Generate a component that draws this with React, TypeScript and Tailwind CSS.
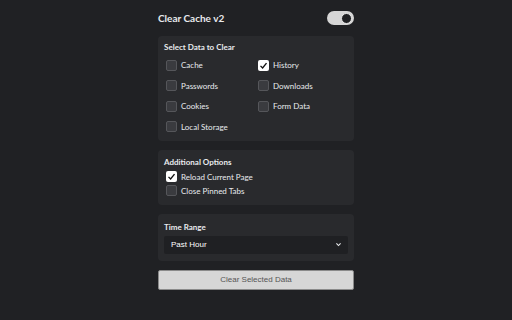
import { useState } from "react";

type Option = { id: string; label: string };

const dataOptions: Option[] = [
  { id: "cache", label: "Cache" },
  { id: "history", label: "History" },
  { id: "passwords", label: "Passwords" },
  { id: "downloads", label: "Downloads" },
  { id: "cookies", label: "Cookies" },
  { id: "formData", label: "Form Data" },
  { id: "localStorage", label: "Local Storage" },
];

function Check({ checked }: { checked: boolean }) {
  return checked ? (
    <span className="flex h-[11px] w-[11px] items-center justify-center rounded-[2px] bg-white">
      <svg viewBox="0 0 12 12" className="h-[9px] w-[9px]">
        <path d="M2 6.5 L4.8 9.2 L10 2.8" fill="none" stroke="#111" strokeWidth="1.8" />
      </svg>
    </span>
  ) : (
    <span className="h-[11px] w-[11px] rounded-[2px] border border-[#55565a] bg-[#3a3b3f]" />
  );
}

export default function App() {
  const [enabled, setEnabled] = useState(true);
  const [selected, setSelected] = useState<Record<string, boolean>>({ history: true });
  const [reload, setReload] = useState(true);
  const [closePinned, setClosePinned] = useState(false);

  return (
    <div
      className="min-h-[320px] w-full bg-[#202124] text-[#e8eaed]"
      style={{ fontFamily: 'Lato, "Open Sans", sans-serif' }}
    >
      <div className="mx-auto flex w-[196px] flex-col pt-[9px]">
        <div className="flex h-[18px] items-center justify-between">
          <h1 className="text-[10px] font-bold">Clear Cache v2</h1>
          <button
            onClick={() => setEnabled(!enabled)}
            className={`flex h-[14px] w-[27px] items-center rounded-full px-[2px] ${
              enabled ? "justify-end bg-[#d6d6d6]" : "justify-start bg-[#5f6368]"
            }`}
          >
            <span className="h-[11px] w-[11px] rounded-full border-[1.5px] border-[#e8e8e8] bg-[#202124]" />
          </button>
        </div>

        {/* data types */}
        <div className="mt-[9px] rounded-[4px] bg-[#292a2d] px-[6px] pb-[8px] pt-[5px]">
          <div className="text-[8px] font-bold leading-[12px]">Select Data to Clear</div>
          <div className="mt-[6px] grid grid-cols-2 gap-y-[8.5px]">
            {dataOptions.map((o) => (
              <label
                key={o.id}
                onClick={() => setSelected({ ...selected, [o.id]: !selected[o.id] })}
                className="flex h-[12px] cursor-pointer items-center gap-[4px] pl-[2px] text-[8px]"
              >
                <Check checked={!!selected[o.id]} />
                <span>{o.label}</span>
              </label>
            ))}
          </div>
        </div>

        {/* extra options */}
        <div className="mt-[9px] rounded-[4px] bg-[#292a2d] px-[6px] pb-[8px] pt-[6px]">
          <div className="text-[8px] font-bold leading-[12px]">Additional Options</div>
          <label
            onClick={() => setReload(!reload)}
            className="mt-[3px] flex h-[12px] cursor-pointer items-center gap-[4px] pl-[2px] text-[8px]"
          >
            <Check checked={reload} />
            <span>Reload Current Page</span>
          </label>
          <label
            onClick={() => setClosePinned(!closePinned)}
            className="mt-[2px] flex h-[12px] cursor-pointer items-center gap-[4px] pl-[2px] text-[8px]"
          >
            <Check checked={closePinned} />
            <span>Close Pinned Tabs</span>
          </label>
        </div>

        {/* time range */}
        <div className="mt-[9px] rounded-[4px] bg-[#292a2d] px-[6px] pb-[7px] pt-[7px]">
          <div className="text-[8px] font-bold leading-[12px]">Time Range</div>
          <div
            className="mt-[3px] flex h-[18px] items-center justify-between rounded-[2px] bg-[#1f2023] pl-[7px] pr-[6px] text-[8px] text-white"
            style={{ fontFamily: '"Liberation Sans", Arial, sans-serif' }}
          >
            <span>Past Hour</span>
            <svg viewBox="0 0 10 10" className="h-[7px] w-[7px]">
              <path d="M2 3.5 L5 6.5 L8 3.5" fill="none" stroke="#e8eaed" strokeWidth="1.6" />
            </svg>
          </div>
        </div>

        <button
          className="mt-[9px] h-[20px] w-full rounded-[2px] border border-[#8a8a8a] bg-[#d6d6d6] text-[8px] text-[#555]"
          style={{ fontFamily: '"Liberation Sans", Arial, sans-serif' }}
        >
          Clear Selected Data
        </button>
      </div>
    </div>
  );
}
